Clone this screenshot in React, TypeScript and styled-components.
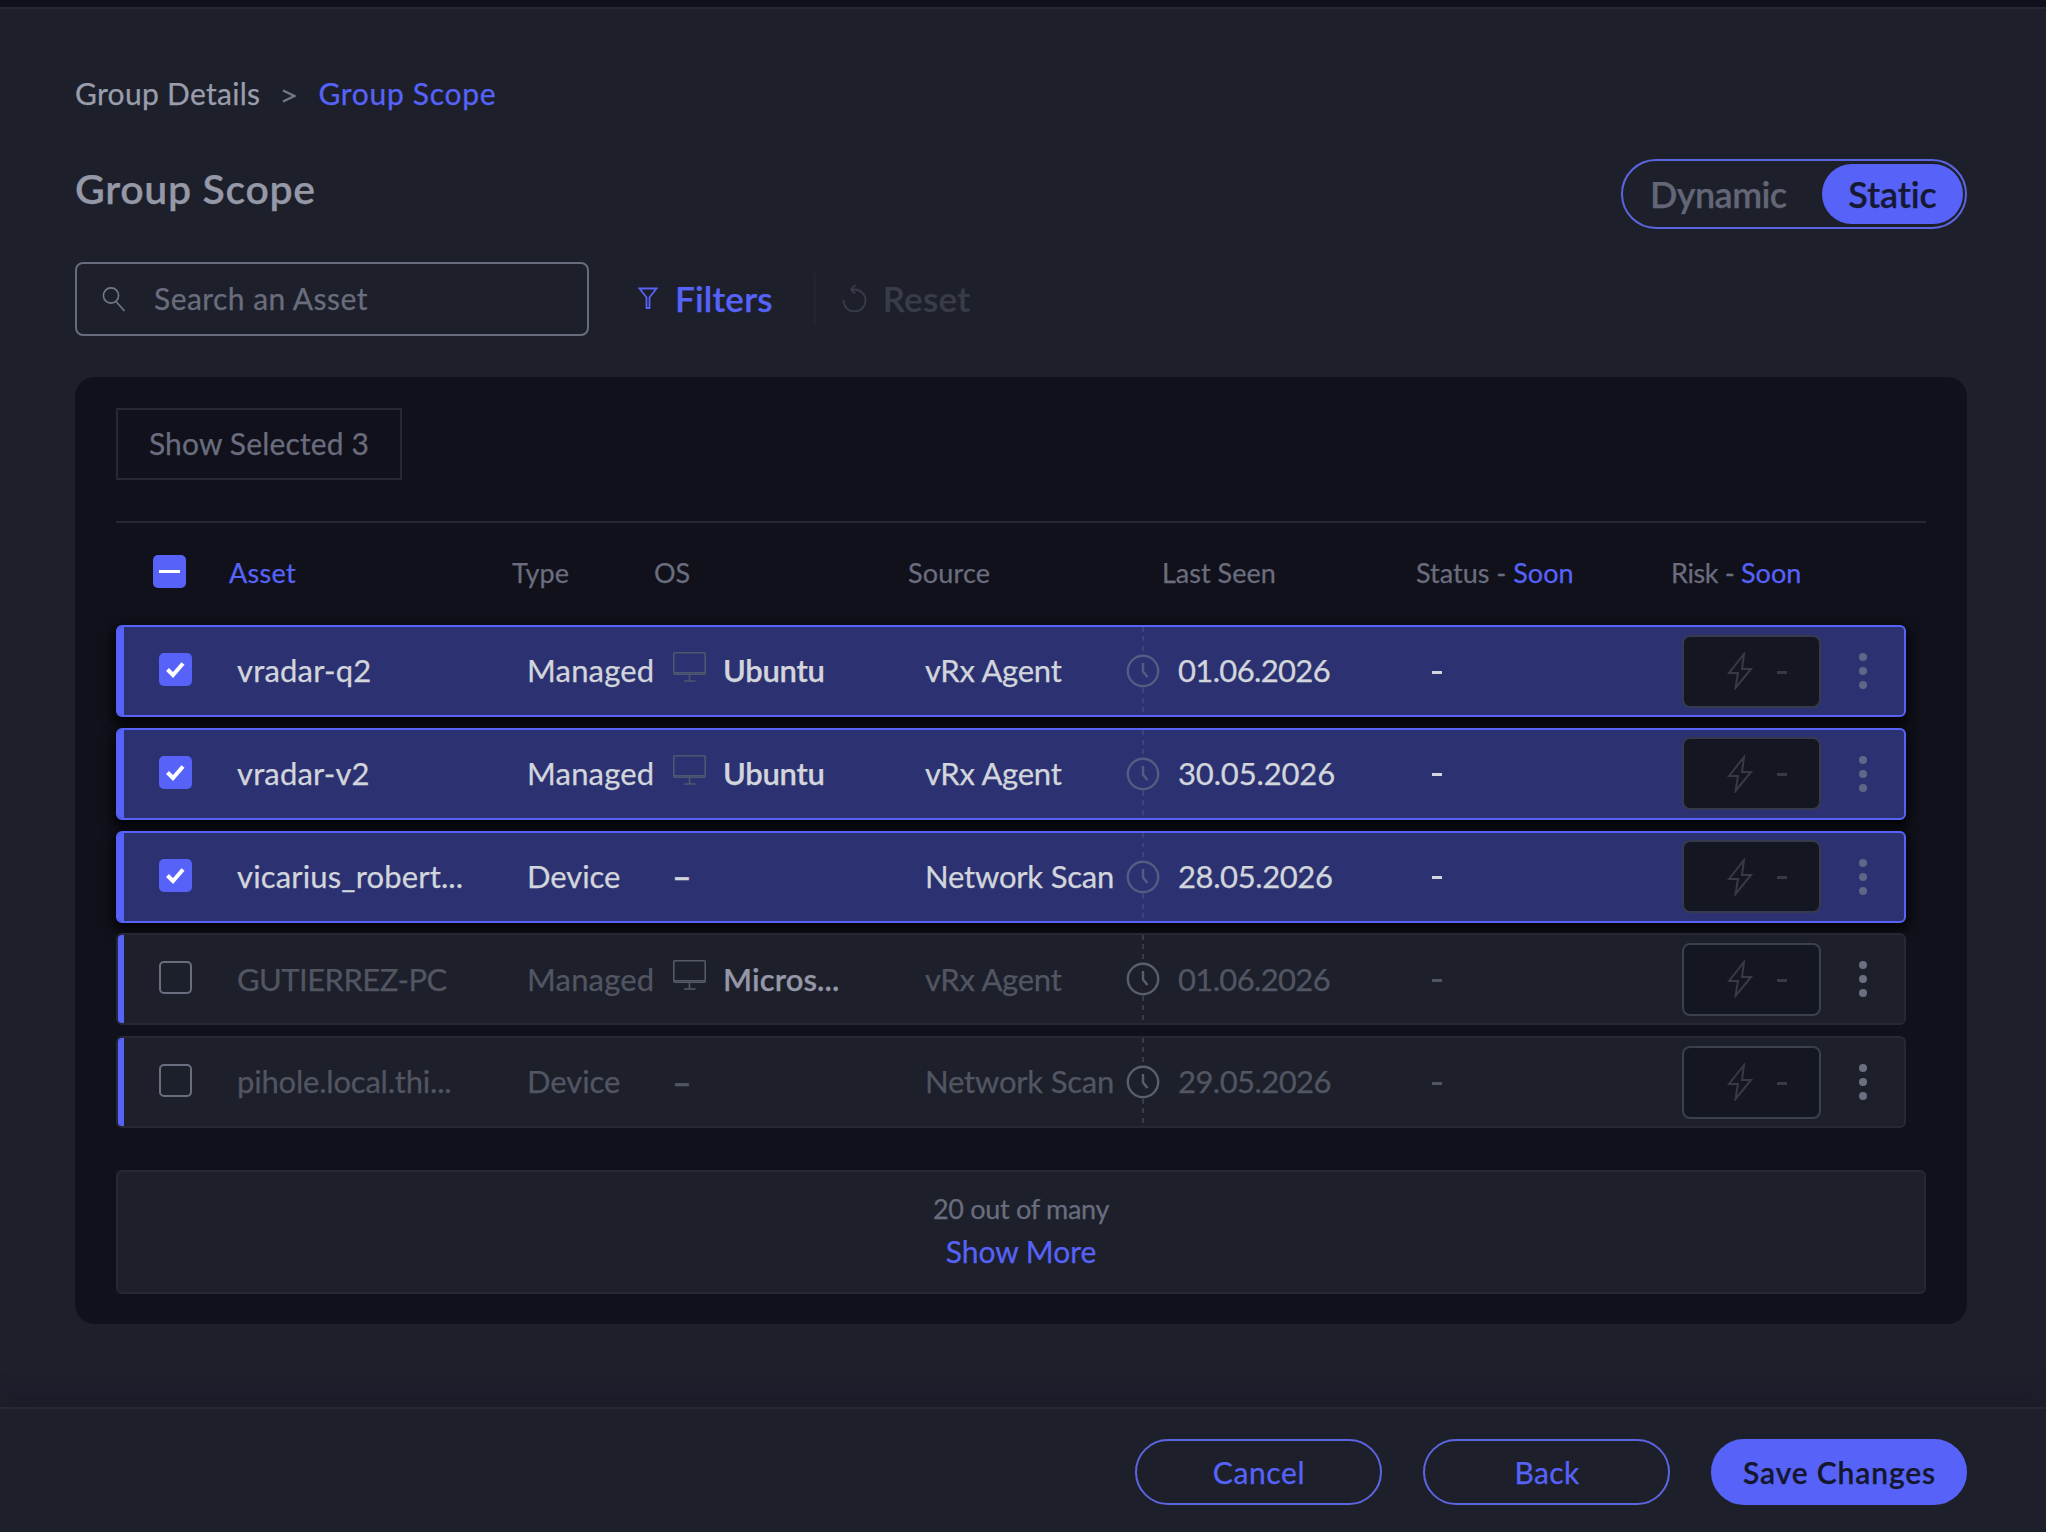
import React from "react";
import styled, { createGlobalStyle, css } from "styled-components";

const color = {
  page: "#1d202b",
  card: "#10111b",
  line: "#262833",
  accent: "#5763f8",
  outline: "#5c65e0",
  selected: "#2c3271",
  muted: "#6a6d7e",
  dim: "#525562",
  soft: "#9a9dab",
  bright: "#d2d6dc",
};

const GlobalStyle = createGlobalStyle`
  *, *::before, *::after { box-sizing: border-box; }
  body {
    margin: 0;
    background: ${color.page};
    font-family: Lato, "Liberation Sans", sans-serif;
    color: ${color.muted};
    -webkit-text-stroke: 0.25px currentColor;
  }
  button, input { font-family: inherit; }
`;

const Page = styled.div`
  display: flex;
  flex-direction: column;
  width: 2046px;
  height: 1532px;
  overflow: hidden;
  background: ${color.page};
`;

const TopStrip = styled.div`
  flex: none;
  height: 9px;
  background: #11111d;
  border-bottom: 2px solid ${color.line};
`;

const Main = styled.main`
  flex: 1;
  display: flex;
  flex-direction: column;
  padding: 65px 79px 0 75px;
`;

const Text = styled.span<{ $size?: number; $weight?: number; $tracking?: number; $color?: string }>`
  font-size: ${(p) => p.$size ?? 31}px;
  font-weight: ${(p) => p.$weight ?? 400};
  letter-spacing: ${(p) => p.$tracking ?? 0}px;
  color: ${(p) => p.$color ?? "inherit"};
  line-height: 1.2;
  white-space: nowrap;
`;

const Breadcrumb = styled.nav`
  display: flex;
  align-items: center;
  height: 38px;
`;

const Separator = styled.svg`
  width: 14px;
  height: 14px;
  margin: 5px 22px 0 22px;
`;

const TitleRow = styled.div`
  display: flex;
  justify-content: space-between;
  align-items: flex-start;
  height: 70px;
  margin-top: 47px;
`;

const Title = styled.h1`
  margin: 6px 0 0;
  font-size: 41px;
  font-weight: 600;
  letter-spacing: 0.65px;
  line-height: 48px;
  color: #9598a7;
`;

const Toggle = styled.div`
  display: flex;
  justify-content: space-between;
  width: 346px;
  height: 70px;
  padding: 3px 2px 3px 27px;
  border: 2px solid ${color.outline};
  border-radius: 35px;
`;

const ToggleOption = styled.button<{ $active?: boolean }>`
  display: flex;
  align-items: center;
  justify-content: center;
  height: 60px;
  padding: 2px 0 0;
  border: 0;
  background: none;
  color: #636677;
  ${(p) =>
    p.$active &&
    css`
      width: 141px;
      border-radius: 30px;
      background: ${color.accent};
      color: #161933;
    `}
`;

const Toolbar = styled.div`
  display: flex;
  align-items: center;
  height: 74px;
  margin-top: 33px;
`;

const SearchBox = styled.label`
  display: flex;
  align-items: center;
  width: 514px;
  height: 74px;
  padding-left: 25px;
  border: 2px solid #686b7b;
  border-radius: 8px;
`;

const SearchIcon = styled.svg`
  width: 24px;
  height: 26px;
  margin-right: 28px;
`;

const SearchInput = styled.input`
  width: 380px;
  padding: 0 0 2px;
  border: 0;
  outline: 0;
  background: none;
  font-size: 30px;
  letter-spacing: 0.45px;
  color: inherit;
  &::placeholder {
    color: ${color.muted};
    opacity: 1;
  }
`;

const ToolButton = styled.button<{ $color: string }>`
  display: flex;
  align-items: center;
  padding: 0 0 2px;
  border: 0;
  background: none;
  color: ${(p) => p.$color};
`;

const FilterButton = styled(ToolButton)`
  margin-left: 49px;
  gap: 17px;
`;

const ResetButton = styled(ToolButton)`
  gap: 15px;
`;

const ToolDivider = styled.div`
  width: 2px;
  height: 52px;
  margin: 0 26px 0 41px;
  background: #22242f;
`;

const Card = styled.section`
  display: flex;
  flex-direction: column;
  height: 947px;
  width: 1892px;
  margin-top: 41px;
  padding: 31px 41px 0;
  border-radius: 20px;
  background: ${color.card};
`;

const ShowSelected = styled.button`
  align-self: flex-start;
  width: 286px;
  height: 72px;
  padding: 0 0 2px;
  border: 2px solid ${color.line};
  background: none;
  color: ${color.muted};
`;

const TableHead = styled.div`
  display: grid;
  grid-template-columns: 76px 283px 142px 254px 254px 254px 255px 1fr;
  align-items: center;
  height: 104px;
  margin-top: 41px;
  padding: 0 0 2px 37px;
  border-top: 2px solid ${color.line};
`;

const Check = styled.span<{ $on?: boolean }>`
  display: flex;
  align-items: center;
  justify-content: center;
  width: 33px;
  height: 33px;
  margin-bottom: 3px;
  border-radius: 5px;
  border: ${(p) => (p.$on ? "0" : "2px solid #6a6d7e")};
  background: ${(p) => (p.$on ? color.accent : "transparent")};
`;

const Rows = styled.div`
  display: flex;
  flex-direction: column;
  gap: 10.75px;
  width: 1790px;
`;

const Row = styled.div<{ $selected: boolean }>`
  display: grid;
  grid-template-columns: 41px 78px 290px 144px 254px 201px 306px 250px 162px 1fr;
  align-items: center;
  height: 92px;
  overflow: hidden;
  border: 2px solid ${(p) => (p.$selected ? color.accent : color.line)};
  border-radius: 6px;
  background: ${(p) => (p.$selected ? color.selected : color.page)};
  color: ${(p) => (p.$selected ? color.bright : color.dim)};
  box-shadow: ${(p) => (p.$selected ? "0 5px 12px 3px rgba(0, 0, 0, 0.75)" : "none")};
`;

const Bar = styled.span`
  width: 6px;
  height: 88px;
  background: ${color.accent};
`;

const OsCell = styled.span`
  display: flex;
  align-items: center;
`;

const Monitor = styled.svg<{ $selected: boolean }>`
  width: 33px;
  height: 30px;
  margin: 0 17px 8px 2px;
  color: ${(p) => (p.$selected ? "#4e5770" : "#565966")};
`;

const NoOs = styled(Text)`
  padding-left: 1px;
`;

const SeenCell = styled.span`
  display: flex;
  align-items: center;
  height: 88px;
`;

const Rail = styled.span<{ $selected: boolean }>`
  display: flex;
  flex-direction: column;
  align-items: center;
  width: 34px;
  height: 88px;
  margin-right: 18px;
  color: ${(p) => (p.$selected ? "#545c82" : "#5b5e6c")};
`;

const Dash = styled.span<{ $selected: boolean }>`
  flex: 1;
  width: 2px;
  background: repeating-linear-gradient(
    to bottom,
    ${(p) => (p.$selected ? "#3d4478" : "#393c48")} 0 5px,
    transparent 5px 9.5px
  );
`;

const RiskBox = styled.span<{ $selected: boolean }>`
  display: flex;
  align-items: center;
  width: 139px;
  height: 73px;
  padding-left: 43px;
  gap: 24px;
  border: 2px solid ${(p) => (p.$selected ? "#363a4c" : "#3c3f4c")};
  border-radius: 8px;
  background: #141621;
  color: #373a45;
`;

const Minus = styled.span<{ $width?: number; $color?: string }>`
  width: ${(p) => p.$width ?? 10}px;
  height: 3px;
  background: ${(p) => p.$color ?? "currentColor"};
`;

const StatusCell = styled.span`
  display: flex;
  padding-top: 2px;
`;

const MenuDots = styled.span<{ $selected: boolean }>`
  display: flex;
  flex-direction: column;
  gap: 6px;
  padding-left: 15px;
  color: ${(p) => (p.$selected ? "#5f6787" : "#6c6f80")};
`;

const Dot = styled.i`
  width: 8px;
  height: 8px;
  border-radius: 50%;
  background: currentColor;
`;

const More = styled.div`
  display: flex;
  flex-direction: column;
  align-items: center;
  justify-content: center;
  gap: 8px;
  height: 124px;
  margin-top: 42px;
  padding-bottom: 2px;
  border: 2px solid ${color.line};
  border-radius: 6px;
  background: ${color.page};
`;

const Footer = styled.footer`
  flex: none;
  display: flex;
  justify-content: flex-end;
  gap: 41px;
  height: 125px;
  padding: 30px 79px 0 0;
  border-top: 2px solid ${color.line};
  box-shadow: 0 -12px 24px rgba(16, 16, 30, 0.2);
`;

const Pill = styled.button<{ $primary?: boolean }>`
  display: flex;
  align-items: center;
  justify-content: center;
  width: ${(p) => (p.$primary ? 256 : 247)}px;
  height: 66px;
  padding: 0 0 1px 1px;
  border-radius: 33px;
  border: 2px solid ${(p) => (p.$primary ? color.accent : color.outline)};
  background: ${(p) => (p.$primary ? color.accent : "transparent")};
  color: ${(p) => (p.$primary ? "#14172f" : color.accent)};
`;

type Cell = { text: string; tracking?: number };
type Asset = { name: Cell; type: Cell; os?: Cell; source: Cell; seen: Cell; selected: boolean };

const managed: Cell = { text: "Managed", tracking: 0.2 };
const device: Cell = { text: "Device", tracking: -0.05 };
const ubuntu: Cell = { text: "Ubuntu", tracking: -0.3 };
const agent: Cell = { text: "vRx Agent", tracking: -0.25 };
const scan: Cell = { text: "Network Scan", tracking: -0.2 };

const assets: Asset[] = [
  { name: { text: "vradar-q2", tracking: 0.2 }, type: managed, os: ubuntu, source: agent, seen: { text: "01.06.2026", tracking: -0.65 }, selected: true },
  { name: { text: "vradar-v2", tracking: 0.15 }, type: managed, os: ubuntu, source: agent, seen: { text: "30.05.2026", tracking: -0.15 }, selected: true },
  { name: { text: "vicarius_robert...", tracking: 0.15 }, type: device, source: scan, seen: { text: "28.05.2026", tracking: -0.4 }, selected: true },
  { name: { text: "GUTIERREZ-PC", tracking: -0.55 }, type: managed, os: { text: "Micros...", tracking: 0.1 }, source: agent, seen: { text: "01.06.2026", tracking: -0.65 }, selected: false },
  { name: { text: "pihole.local.thi...", tracking: -0.2 }, type: device, source: scan, seen: { text: "29.05.2026", tracking: -0.55 }, selected: false },
];

const CheckMark = () => (
  <svg width="19" height="19" viewBox="0 0 19 19" fill="none" stroke="#fff" strokeWidth="4">
    <path d="M1.5 9.5 7 15 17 3.5" />
  </svg>
);

const AssetRow = ({ asset }: { asset: Asset }) => {
  const on = asset.selected;
  return (
    <Row $selected={on}>
      <Bar />
      <Check $on={on}>{on && <CheckMark />}</Check>
      <Text $tracking={asset.name.tracking}>{asset.name.text}</Text>
      <Text $tracking={asset.type.tracking}>{asset.type.text}</Text>
      {asset.os ? (
        <OsCell>
          <Monitor $selected={on} viewBox="0 0 33 30" fill="none" stroke="currentColor" strokeWidth="1.6">
            <rect x="0.8" y="0.8" width="31.4" height="21.4" rx="1" />
            <path d="M1 20.8H32M16.5 22.5V28.5M11 29H22.5" />
          </Monitor>
          <Text $weight={600} $tracking={asset.os.tracking} $color={on ? undefined : "#9598a8"}>
            {asset.os.text}
          </Text>
        </OsCell>
      ) : (
        <NoOs $size={34} $weight={600}>–</NoOs>
      )}
      <Text $tracking={asset.source.tracking}>{asset.source.text}</Text>
      <SeenCell>
        <Rail $selected={on}>
          <Dash $selected={on} />
          <svg width="34" height="34" viewBox="0 0 34 34" fill="none" stroke="currentColor" strokeWidth="2.4">
            <circle cx="17" cy="17" r="15.200" />
            <path d="M17 9V17.5L21.500 23" />
          </svg>
          <Dash $selected={on} />
        </Rail>
        <Text $tracking={asset.seen.tracking}>{asset.seen.text}</Text>
      </SeenCell>
      <StatusCell>
        <Minus />
      </StatusCell>
      <RiskBox $selected={on}>
        <svg width="26" height="38" viewBox="0 0 26 38" fill="none" stroke="currentColor" strokeWidth="2">
          <path d="M17 2 2 21H11L8.500 36 24 17H15Z" />
        </svg>
        <StatusCell>
          <Minus />
        </StatusCell>
      </RiskBox>
      <MenuDots $selected={on}>
        <Dot />
        <Dot />
        <Dot />
      </MenuDots>
    </Row>
  );
};

export default function App() {
  return (
    <>
      <GlobalStyle />
      <Page>
        <TopStrip />
        <Main>
          <Breadcrumb>
            <Text $size={30} $tracking={0.3} $color={color.soft}>Group Details</Text>
            <Separator viewBox="0 0 14 14" fill="none" stroke="#777a89" strokeWidth="2">
              <path d="M1 1.500 12.500 7 1 12.500" />
            </Separator>
            <Text $size={30} $tracking={0.7} $color={color.accent}>Group Scope</Text>
          </Breadcrumb>
          <TitleRow>
            <Title>Group Scope</Title>
            <Toggle>
              <ToggleOption>
                <Text $size={36} $weight={600} $tracking={-0.55}>Dynamic</Text>
              </ToggleOption>
              <ToggleOption $active>
                <Text $size={36} $weight={600} $tracking={-0.15}>Static</Text>
              </ToggleOption>
            </Toggle>
          </TitleRow>
          <Toolbar>
            <SearchBox>
              <SearchIcon viewBox="0 0 24 26" fill="none" stroke="#747787" strokeWidth="1.6">
                <circle cx="9" cy="9.500" r="7.600" />
                <path d="M14 15.500 22.500 25" />
              </SearchIcon>
              <SearchInput placeholder="Search an Asset" />
            </SearchBox>
            <FilterButton $color={color.accent}>
              <svg width="20" height="24" viewBox="0 0 20 24" fill="none" stroke="currentColor" strokeWidth="1.8">
                <path d="M1.500 2.500H18.500L11.500 11.500V22H8.500V11.500Z" />
              </svg>
              <Text $size={35} $weight={600} $tracking={0.2}>Filters</Text>
            </FilterButton>
            <ToolDivider />
            <ResetButton $color="#393c48">
              <svg width="26" height="28" viewBox="0 0 26 28" fill="none" stroke="currentColor" strokeWidth="1.8">
                <path d="M1.500 16A11 11 0 1 0 12 5.500H9M13.500 1 9 5.500 13 9.500" />
              </svg>
              <Text $size={35} $weight={600} $tracking={0.3}>Reset</Text>
            </ResetButton>
          </Toolbar>
          <Card>
            <ShowSelected>
              <Text $size={30} $tracking={0.15}>Show Selected 3</Text>
            </ShowSelected>
            <TableHead>
              <Check $on>
                <Minus $width={21} $color="#fff" />
              </Check>
              <Text $size={27} $tracking={0.3} $color={color.accent}>Asset</Text>
              <Text $size={27}>Type</Text>
              <Text $size={27}>OS</Text>
              <Text $size={27} $tracking={0.2}>Source</Text>
              <Text $size={27}>Last Seen</Text>
              <Text $size={27}>
                Status - <Text $size={27} $color={color.accent}>Soon</Text>
              </Text>
              <Text $size={27} $tracking={-0.35}>
                Risk - <Text $size={27} $color={color.accent}>Soon</Text>
              </Text>
            </TableHead>
            <Rows>
              {assets.map((a) => (
                <AssetRow key={a.name.text} asset={a} />
              ))}
            </Rows>
            <More>
              <Text $size={27} $tracking={-0.3}>20 out of many</Text>
              <Text $size={30} $color={color.accent}>Show More</Text>
            </More>
          </Card>
        </Main>
        <Footer>
          <Pill>
            <Text $size={30} $tracking={0.65}>Cancel</Text>
          </Pill>
          <Pill>
            <Text $size={30} $tracking={0.4}>Back</Text>
          </Pill>
          <Pill $primary>
            <Text $size={30} $weight={600} $tracking={0.85}>Save Changes</Text>
          </Pill>
        </Footer>
      </Page>
    </>
  );
}
